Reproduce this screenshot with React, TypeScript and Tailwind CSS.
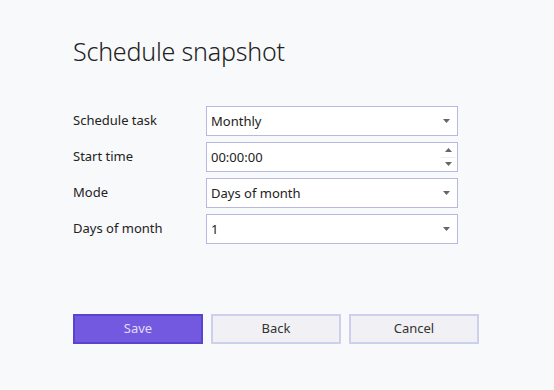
import React from 'react';

const Caret = ({ up = false }: { up?: boolean }) => (
  <svg width="7" height="4" viewBox="0 0 7 4" className={up ? 'rotate-180' : ''}>
    <path d="M0 0 H7 L3.5 4 Z" fill="#666" />
  </svg>
);

const Field = ({ label, value, spin = false }: { label: string; value: string; spin?: boolean }) => (
  <div className="flex items-center h-[30px]">
    <div className="w-[133px] text-[13px] text-[#222]">{label}</div>
    <div className="relative w-[252px] h-[30px] border border-[#b8b8e2] bg-white flex items-center pl-[4px] pt-[2px] text-[13px] text-[#222]">
      <span>{value}</span>
      {spin ? (
        <div className="absolute right-[2px] top-0 bottom-0 w-[14px] flex flex-col items-center justify-center">
          <div className="h-[13px] flex items-center"><Caret up /></div>
          <div className="w-full h-px bg-[#ececf2]" />
          <div className="h-[13px] flex items-center"><Caret /></div>
        </div>
      ) : (
        <div className="absolute right-[7px] top-0 bottom-0 flex items-center">
          <Caret />
        </div>
      )}
    </div>
  </div>
);

export default function App() {
  return (
    <div
      className="w-[554px] h-[390px] bg-[#f8f9fb] pl-[73px] pt-[33px]"
      style={{ fontFamily: '"Noto Sans", "Open Sans", sans-serif' }}
    >
      <h1 className="text-[25px] font-light text-[#222] leading-[36px] tracking-[-0.2px]">Schedule snapshot</h1>
      <div className="mt-[37px] flex flex-col gap-[6px]">
        <Field label="Schedule task" value="Monthly" />
        <Field label="Start time" value="00:00:00" spin />
        <Field label="Mode" value="Days of month" />
        <Field label="Days of month" value="1" />
      </div>
      <div className="mt-[70px] flex gap-[8px]">
        <button className="w-[130px] h-[30px] bg-[#7259e0] border-2 border-[#5b43d2] text-[13px] text-[#e2dcfa]">
          Save
        </button>
        <button className="w-[130px] h-[30px] bg-[#f1f1f5] border-2 border-[#cdd0ec] text-[13px] text-[#333]">
          Back
        </button>
        <button className="w-[130px] h-[30px] bg-[#f1f1f5] border-2 border-[#cdd0ec] text-[13px] text-[#333]">
          Cancel
        </button>
      </div>
    </div>
  );
}
